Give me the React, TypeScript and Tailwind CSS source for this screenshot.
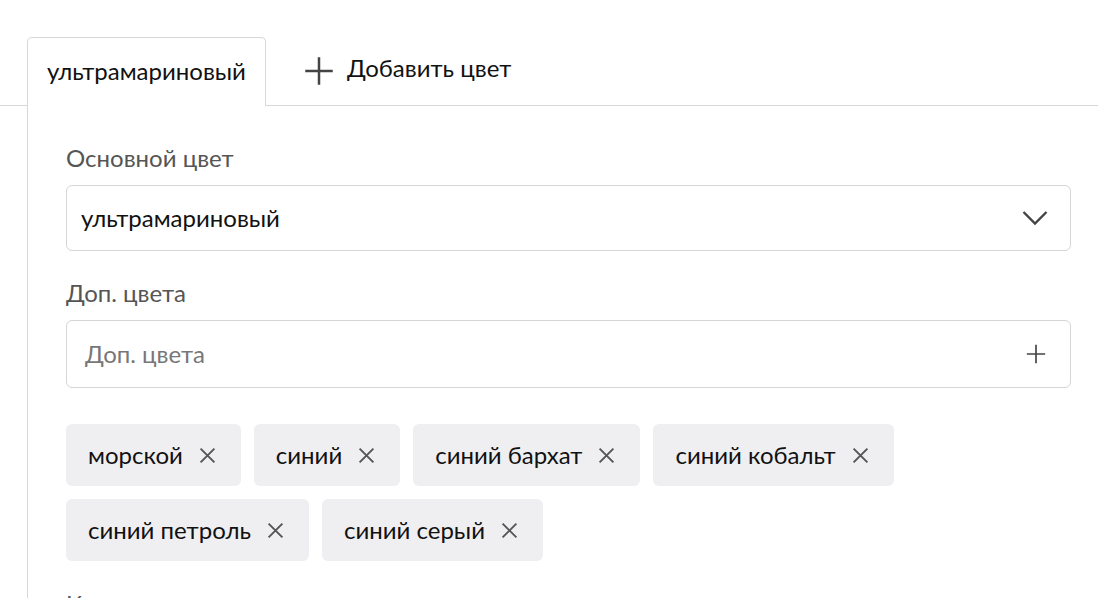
import React from 'react';

const chips = ['морской', 'синий', 'синий бархат', 'синий кобальт', 'синий петроль', 'синий серый'];

function PlusIcon({ className }: { className?: string }) {
  return (
    <svg viewBox="0 0 24 24" className={className} fill="none" stroke="currentColor" strokeWidth={2}>
      <path d="M12 1v22M1 12h22" />
    </svg>
  );
}

function CloseIcon() {
  return (
    <svg viewBox="0 0 16 16" className="w-[17px] h-[17px] text-[#555]" fill="none" stroke="currentColor" strokeWidth={1.8}>
      <path d="M1.5 1.5l13 13M14.5 1.5l-13 13" />
    </svg>
  );
}

export default function App() {
  return (
    <div className="w-[1098px] h-[598px] overflow-hidden bg-white text-[#111] font-['Lato','Liberation_Sans',sans-serif]">
      <div className="pt-[37px]">
        <div className="flex items-end">
          <div className="w-[27px] border-b border-[#d8d8dc] h-[69px]" />
          <div className="h-[69px] w-[239px] border border-b-0 border-[#d8d8dc] rounded-t-[5px] flex items-center pl-[19px] text-[24px] leading-[30px] pb-[3px]">
            ультрамариновый
          </div>
          <div className="flex-1 h-[69px] border-b border-[#d8d8dc] flex items-center pl-[38px] pb-[6px]">
            <PlusIcon className="w-[30px] h-[30px] text-[#444] mt-[6px]" />
            <span className="ml-[13px] text-[24px] leading-[30px]">Добавить цвет</span>
          </div>
        </div>
        <div className="ml-[27px] border-l border-[#d8d8dc] pl-[38px] pr-[27px] pt-[37px]">
          <div className="text-[24px] text-[#555] leading-[30px]">Основной цвет</div>
          <div className="mt-[12px] h-[66px] border border-[#d5d5da] rounded-[6px] flex items-center justify-between pl-[14px] pr-[22px]">
            <span className="text-[24px] leading-[30px]">ультрамариновый</span>
            <svg viewBox="0 0 26 16" className="w-[26px] h-[16px] text-[#444]" fill="none" stroke="currentColor" strokeWidth={2.4}>
              <path d="M1.5 2l11.5 11.5L24.5 2" />
            </svg>
          </div>
          <div className="mt-[27px] text-[24px] text-[#555] leading-[30px]">Доп. цвета</div>
          <div className="mt-[12px] h-[68px] border border-[#d5d5da] rounded-[6px] flex items-center justify-between pl-[18px] pr-[24px]">
            <span className="text-[24px] leading-[30px] text-[#777]">Доп. цвета</span>
            <PlusIcon className="w-[20px] h-[20px] text-[#444]" />
          </div>
          <div className="mt-[36px] flex flex-wrap gap-[13px] w-[900px]">
            {chips.map((c) => (
              <div key={c} className="h-[62px] bg-[#efeff1] rounded-[6px] flex items-center pl-[22px] pr-[25px] gap-[16px]">
                <span className="text-[24px] leading-[30px]">{c}</span>
                <CloseIcon />
              </div>
            ))}
          </div>
          <div className="mt-[28px] text-[24px] leading-[30px] text-[#555]">Комплектация</div>
        </div>
      </div>
    </div>
  );
}
